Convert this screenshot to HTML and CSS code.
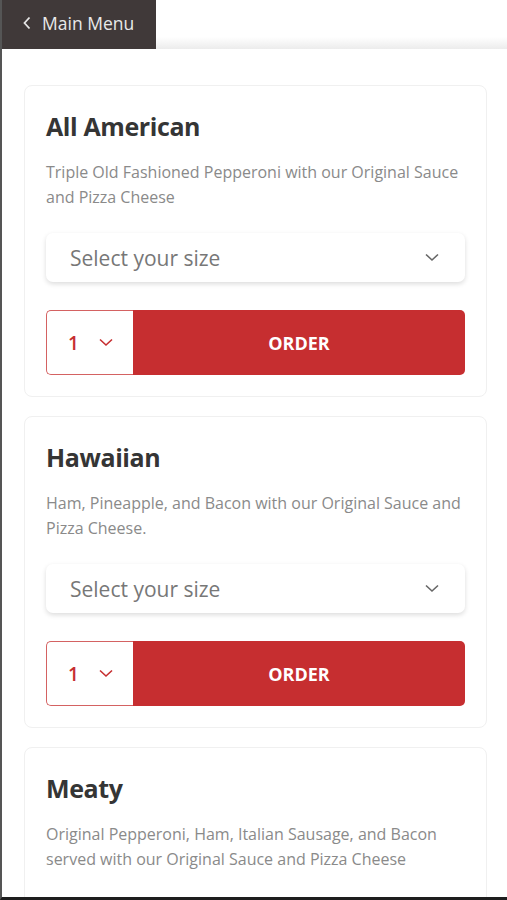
FILE: index.html
```html
<!DOCTYPE html>
<html>
<head>
<meta charset="utf-8">
<link rel="stylesheet" href="styles.css">
</head>
<body>
<div class="frame">
  <header class="topbar">
    <a class="back">
      <svg class="back-icon" width="10" height="16" viewBox="0 0 10 16"><path d="M7.5 2.5 L2.5 8 L7.5 13.5" fill="none" stroke="#e6e6e6" stroke-width="1.8"/></svg>
      <span>Main Menu</span>
    </a>
  </header>
  <main class="list">
    <section class="card">
      <h2 class="title">All American</h2>
      <p class="desc">Triple Old Fashioned Pepperoni with our Original Sauce and Pizza Cheese</p>
      <div class="select">
        <span>Select your size</span>
        <svg width="14" height="9" viewBox="0 0 14 9"><path d="M1 1.5 L7 7 L13 1.5" fill="none" stroke="#666" stroke-width="1.6"/></svg>
      </div>
      <div class="order-row">
        <div class="qty"><span>1</span><svg width="14" height="9" viewBox="0 0 14 9"><path d="M1 1.5 L7 7 L13 1.5" fill="none" stroke="#c62e30" stroke-width="1.6"/></svg></div>
        <button class="order">ORDER</button>
      </div>
    </section>
    <section class="card">
      <h2 class="title">Hawaiian</h2>
      <p class="desc">Ham, Pineapple, and Bacon with our Original Sauce and Pizza Cheese.</p>
      <div class="select">
        <span>Select your size</span>
        <svg width="14" height="9" viewBox="0 0 14 9"><path d="M1 1.5 L7 7 L13 1.5" fill="none" stroke="#666" stroke-width="1.6"/></svg>
      </div>
      <div class="order-row">
        <div class="qty"><span>1</span><svg width="14" height="9" viewBox="0 0 14 9"><path d="M1 1.5 L7 7 L13 1.5" fill="none" stroke="#c62e30" stroke-width="1.6"/></svg></div>
        <button class="order">ORDER</button>
      </div>
    </section>
    <section class="card card-last">
      <h2 class="title">Meaty</h2>
      <p class="desc">Original Pepperoni, Ham, Italian Sausage, and Bacon served with our Original Sauce and Pizza Cheese</p>
    </section>
  </main>
</div>
</body>
</html>
```
FILE: styles.css
```css
* { box-sizing: border-box; }
html, body { margin: 0; padding: 0; background: #fff; }
body { font-family: "Open Sans", "Noto Sans", sans-serif; }
.frame {
  height: 900px;
  overflow: hidden;
  border-left: 2px solid #555;
  border-bottom: 3px solid #1e1e1e;
  background: #fff;
}
.topbar {
  height: 49px;
  display: flex;
  background: linear-gradient(#fff 0, #fff 75%, #ececec 100%);
  margin-left: -2px;
}
.back {
  width: 156px;
  background: #403939;
  color: #e9e9e9;
  display: flex;
  align-items: center;
  gap: 10px;
  padding-left: 22px;
  font-size: 17.5px;
  padding-bottom: 4px;
}
.list {
  padding: 36px 20px 0 22px;
  display: flex;
  flex-direction: column;
  gap: 19px;
}
.card {
  border: 1px solid #f0f0f0;
  border-radius: 8px;
  padding: 20px 21px 21px 21px;
  background: #fff;
}
.card-last {
  min-height: 300px;
}
.title {
  margin: 0;
  font-size: 25px;
  letter-spacing: -0.4px;
  font-weight: 700;
  color: #353535;
  line-height: 40px;
}
.desc {
  margin: 14px 0 23px;
  font-size: 16px;
  line-height: 25px;
  color: #8a8a8a;
}
.select {
  height: 49px;
  border-radius: 7px;
  box-shadow: 0 2px 5px rgba(0,0,0,0.14);
  display: flex;
  align-items: center;
  justify-content: space-between;
  padding: 0 26px 0 24px;
  font-size: 21px;
  color: #777;
}
.order-row {
  margin-top: 28px;
  height: 65px;
  display: flex;
}
.qty {
  width: 87px;
  border: 1px solid #d46262;
  border-right: none;
  border-radius: 5px 0 0 5px;
  display: flex;
  align-items: center;
  gap: 20px;
  padding-left: 21px;
  color: #c62e30;
  font-size: 19px;
  font-weight: 600;
}
.order {
  flex: 1;
  border: none;
  background: #c62e30;
  color: #fff;
  border-radius: 0 5px 5px 0;
  font-family: inherit;
  font-size: 18px;
  font-weight: 700;
}
```
